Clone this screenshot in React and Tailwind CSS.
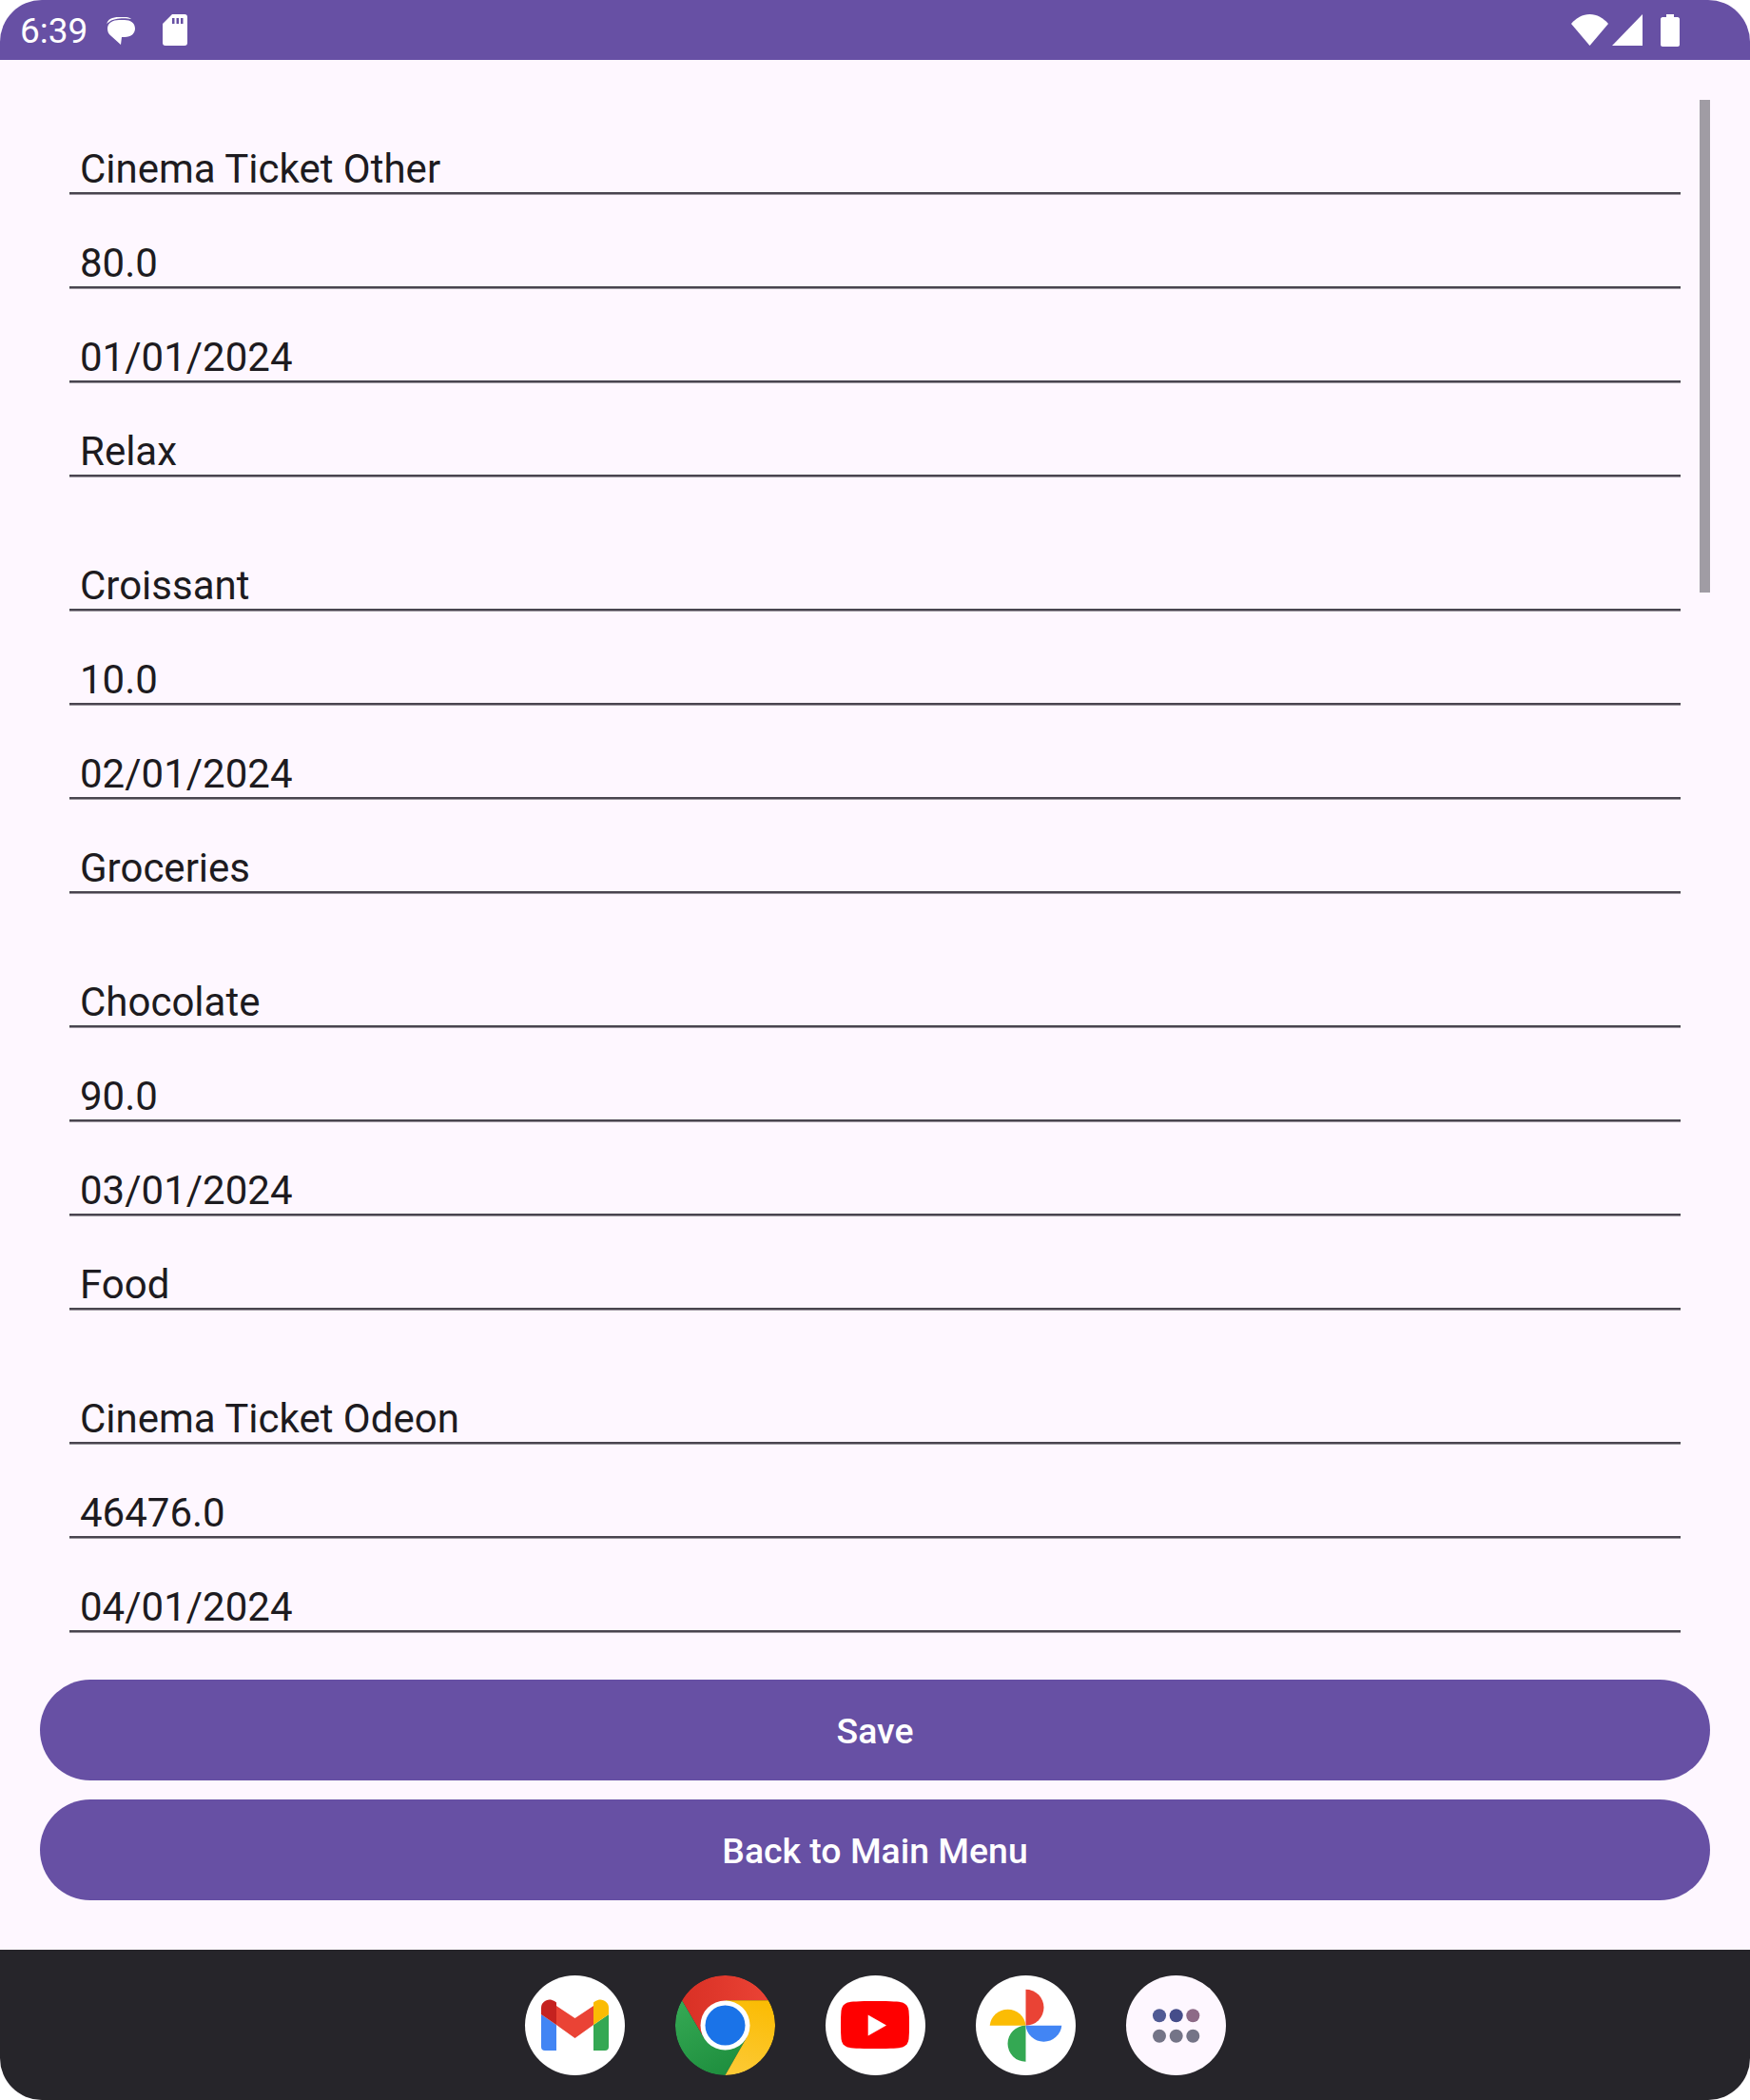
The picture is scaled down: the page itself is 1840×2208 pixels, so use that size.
import React from 'react';

const groups = [
  ['Cinema Ticket Other', '80.0', '01/01/2024', 'Relax'],
  ['Croissant', '10.0', '02/01/2024', 'Groceries'],
  ['Chocolate', '90.0', '03/01/2024', 'Food'],
  ['Cinema Ticket Odeon', '46476.0', '04/01/2024'],
];

const Row = ({ value }) => (
  <div className="h-[99px] flex items-end px-[11px] border-b-2 border-[#49454f] shadow-[0_1px_0_rgba(73,69,79,0.55)] text-[42px] leading-[49px] text-[#1d1b20]">
    <span>{value}</span>
  </div>
);

const PillButton = ({ children }) => (
  <button className="h-[106px] w-full rounded-full bg-[#6750a4] text-[#fff] text-[37.4px] font-medium pt-[2px]">
    {children}
  </button>
);

const StatusIcons = () => (
  <>
    <svg className="ml-[20px] mt-[1px] w-[31px] h-[30px]" viewBox="0 0 31 30">
      <path d="M1 9 C2 3 7 1 14 1 H22 C24 1 26 2 27 3 C20 1.500 8 2 4 6 C2 7 1 8 1 9Z" fill="#fff" />
      <path d="M14 4 H20 C26 4 31 7 31 13 C31 18 27 22 20 22 H17 L16 30 L6 21 C3 19 2 16 2 13 C2 7 8 4 14 4Z" fill="#fff" />
    </svg>
    <svg className="ml-[29px] w-[26px] h-[33px]" viewBox="0 0 26 33">
      <path fill="#fff" fillRule="evenodd" d="M10 0 H23 C25 0 26 1 26 3 V30 C26 32 25 33 23 33 H3 C1 33 0 32 0 30 V10 Z M10 4 V10 H12.500 V4 Z M14.500 4 V10 H17 V4 Z M19 4 V10 H21.500 V4 Z" />
    </svg>
  </>
);

const SystemIcons = () => (
  <>
    <svg className="w-[39px] h-[33px]" viewBox="0 0 39 33">
      <path d="M0 10 C5 4 12 0 19.500 0 C27 0 34 4 39 10 L19.500 33 Z" fill="#fff" />
    </svg>
    <svg className="ml-[4px] w-[32px] h-[33px]" viewBox="0 0 32 33">
      <path d="M32 0 V33 H0 Z" fill="#fff" />
    </svg>
    <svg className="ml-[19px] w-[20px] h-[34px]" viewBox="0 0 20 34">
      <path d="M6 0 H14 V3 H18 C19 3 20 4 20 5 V32 C20 33 19 34 18 34 H2 C1 34 0 33 0 32 V5 C0 4 1 3 2 3 H6 Z" fill="#fff" />
    </svg>
  </>
);

const DockIcon = ({ bg = 'bg-white', children }) => (
  <div className={`w-[105px] h-[105px] rounded-full overflow-hidden ${bg}`}>
    <svg className="w-full h-full" viewBox="0 0 105 105">{children}</svg>
  </div>
);

const Gmail = () => (
  <DockIcon>
    <path d="M17 41 L33 52 V79 H21 Q17 79 17 75 Z" fill="#4285f4" />
    <path d="M88 41 L72 52 V79 H84 Q88 79 88 75 Z" fill="#34a853" />
    <path d="M33 32 L52.500 45 L72 32 V52 L52.500 66 L33 52 Z" fill="#ea4335" />
    <path d="M33 52 L17 41 V34 C17 27 25 23 31 27 L33 28.500 Z" fill="#c5221f" />
    <path d="M72 52 L88 41 V34 C88 27 80 23 74 27 L72 28.500 Z" fill="#fbbc04" />
  </DockIcon>
);

const Chrome = () => (
  <DockIcon bg="bg-transparent">
    <defs>
      <linearGradient id="chromeRed" x1="0" y1="0.5" x2="1" y2="0.5">
        <stop offset="0" stopColor="#d93025" />
        <stop offset="1" stopColor="#ea4335" />
      </linearGradient>
      <linearGradient id="chromeGreen" x1="0.2" y1="0" x2="0.7" y2="1">
        <stop offset="0" stopColor="#34a853" />
        <stop offset="1" stopColor="#1e8e3e" />
      </linearGradient>
      <linearGradient id="chromeYellow" x1="0.6" y1="0" x2="0.4" y2="1">
        <stop offset="0" stopColor="#fbbc04" />
        <stop offset="1" stopColor="#fcc934" />
      </linearGradient>
    </defs>
    <path d="M7.030 26.250 A52.500 52.500 0 0 1 97.970 26.250 H52.500 L30 65.500 Z" fill="url(#chromeRed)" />
    <path d="M7.030 26.250 L30 65.500 H75 L52.500 105 A52.500 52.500 0 0 1 7.030 26.250 Z" fill="url(#chromeGreen)" />
    <path d="M97.970 26.250 H52.500 L75 65.500 L52.500 105 A52.500 52.500 0 0 0 97.970 26.250 Z" fill="url(#chromeYellow)" />
    <circle cx="52.500" cy="52.500" r="26" fill="#fff" />
    <circle cx="52.500" cy="52.500" r="21" fill="#1a73e8" />
  </DockIcon>
);

const YouTube = () => (
  <DockIcon>
    <path d="M52 27 C70 27 77 27.500 81 28.500 C85 30 87 33 87.500 37 C88 42 88 47 88 52 C88 57 88 62 87.500 67 C87 71 85 74 81 75.500 C77 76.500 70 77 52 77 C34 77 27 76.500 23 75.500 C19 74 17 71 16.500 67 C16 62 16 57 16 52 C16 47 16 42 16.500 37 C17 33 19 30 23 28.500 C27 27.500 34 27 52 27 Z" fill="#ff0000" />
    <path d="M44.700 41.500 L64 52.500 L44.700 63.500 Z" fill="#fff" />
  </DockIcon>
);

const Photos = () => (
  <DockIcon>
    <path d="M52.500 14.700 A19 19 0 0 1 52.500 52.700 Z" fill="#ea4335" />
    <path d="M14.700 52.700 A19 19 0 0 1 52.500 52.700 Z" fill="#fbbc04" />
    <path d="M52.500 52.700 A19 19 0 0 0 52.500 90.700 Z" fill="#34a853" />
    <path d="M52.500 52.700 A19 19 0 0 0 90.300 52.700 Z" fill="#4285f4" />
  </DockIcon>
);

const Apps = () => (
  <DockIcon bg="bg-[#fef7ff]">
    <circle cx="35" cy="42.300" r="7" fill="#505a94" />
    <circle cx="52.700" cy="42.300" r="7" fill="#454d8a" />
    <circle cx="70.300" cy="42.300" r="7" fill="#8d6a87" />
    <circle cx="35" cy="63.700" r="7" fill="#747487" />
    <circle cx="52.700" cy="63.700" r="7" fill="#747487" />
    <circle cx="70.300" cy="63.700" r="7" fill="#747487" />
  </DockIcon>
);

export default function App() {
  return (
    <div className="relative w-[1840px] h-[2208px] bg-white font-['Roboto',sans-serif]">
      <div className="h-full flex flex-col rounded-[44px] overflow-hidden bg-[#fef7ff]">
        <header className="h-[63px] shrink-0 bg-[#6750a4] flex items-center pl-[21px] pr-[74px] text-white">
          <span className="text-[37px] leading-none mt-[2px] w-[70px]">6:39</span>
          <StatusIcons />
          <div className="ml-auto flex items-center">
            <SystemIcons />
          </div>
        </header>

        <main className="flex-1 min-h-0 overflow-hidden pt-[42px] mx-[73px] w-[1694px] flex flex-col gap-[42px]">
          {groups.map((fields) => (
            <div key={fields[0]} className="shrink-0">
              {fields.map((f) => <Row key={f} value={f} />)}
            </div>
          ))}
        </main>

        <div className="shrink-0 px-[42px] pt-[20px] pb-[52px] flex flex-col gap-[20px]">
          <PillButton>Save</PillButton>
          <PillButton>Back to Main Menu</PillButton>
        </div>

        <nav className="h-[158px] shrink-0 bg-[#26252a] flex items-center justify-center gap-[53px]">
          <Gmail />
          <Chrome />
          <YouTube />
          <Photos />
          <Apps />
        </nav>
      </div>
      <div className="absolute left-[1787px] top-[105px] w-[11px] h-[518px] bg-[#a09ca4]" />
    </div>
  );
}
